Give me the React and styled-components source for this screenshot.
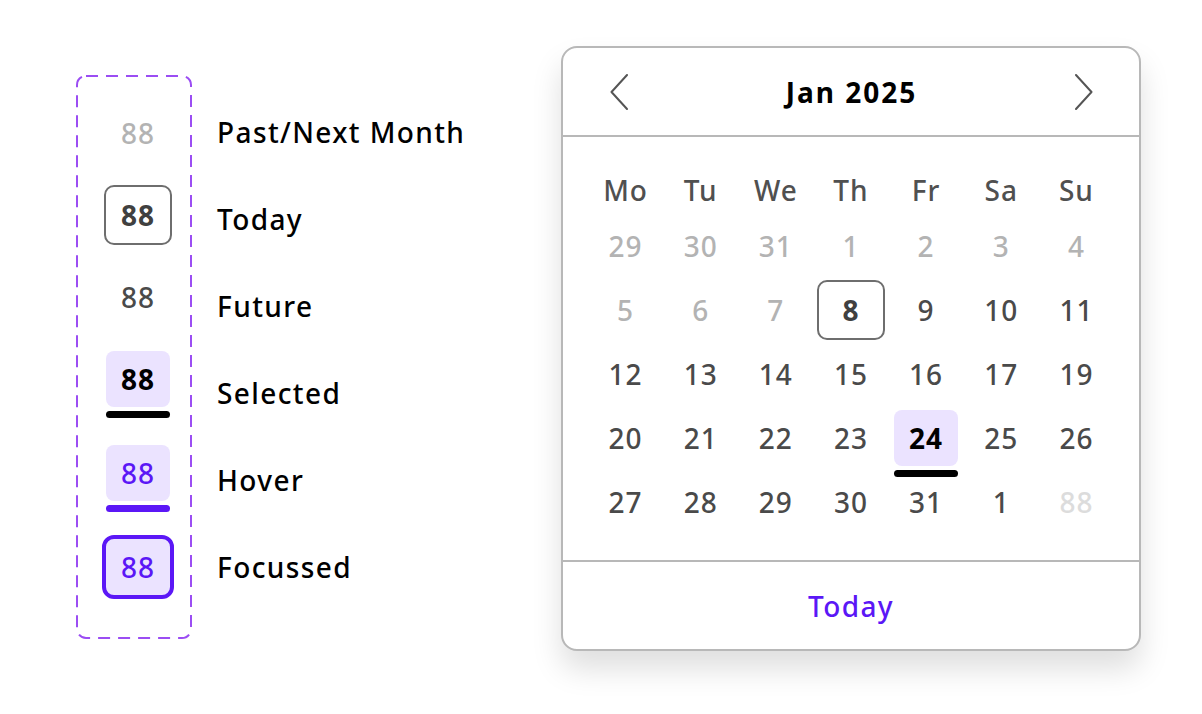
import React from "react";
import styled, { createGlobalStyle, css } from "styled-components";

const PURPLE = "#5b17f6";
const TINT = "#ebe3ff";

const GlobalStyle = createGlobalStyle`
  html, body {
    margin: 0;
    background: #fff;
  }
  body {
    font-family: "Noto Sans", "Liberation Sans", sans-serif;
    color: #000;
  }
`;

const LEGEND = [
  { label: "Past/Next Month", variant: "muted" },
  { label: "Today", variant: "today" },
  { label: "Future", variant: "plain" },
  { label: "Selected", variant: "selected" },
  { label: "Hover", variant: "hover" },
  { label: "Focussed", variant: "focus" },
];

const WEEKDAYS = ["Mo", "Tu", "We", "Th", "Fr", "Sa", "Su"];

const DAYS = [
  ...[29, 30, 31, 1, 2, 3, 4, 5, 6, 7].map((n) => ({ n, variant: "muted" })),
  { n: 8, variant: "today" },
  ...[9, 10, 11, 12, 13, 14, 15, 16, 17, 19, 20, 21, 22, 23].map((n) => ({ n, variant: "plain" })),
  { n: 24, variant: "selected" },
  ...[25, 26, 27, 28, 29, 30, 31, 1].map((n) => ({ n, variant: "plain" })),
  { n: 88, variant: "faint" },
];

const dashedBox = `url("data:image/svg+xml,%3Csvg xmlns='http://www.w3.org/2000/svg' width='116' height='564'%3E%3Crect x='1' y='1' width='114' height='562' rx='9' fill='none' stroke='%239b4df3' stroke-width='2' stroke-dasharray='12 8'/%3E%3C/svg%3E")`;

function Chevron({ flip }) {
  return (
    <svg width="18" height="36" viewBox="0 0 18 36" style={flip ? { transform: "scaleX(-1)" } : undefined}>
      <path d="M17 1 L1.5 18 L17 35" fill="none" stroke="#555" strokeWidth="2" strokeLinecap="round" strokeLinejoin="round" />
    </svg>
  );
}

export default function App() {
  return (
    <S.Page>
      <GlobalStyle />
      <S.Legend>
        <S.Swatches>
          {LEGEND.map(({ label, variant }) => (
            <S.SwatchSlot key={label} $underlined={variant === "selected" || variant === "hover"}>
              <S.Cell $variant={variant}>88</S.Cell>
            </S.SwatchSlot>
          ))}
        </S.Swatches>
        <S.Labels>
          {LEGEND.map(({ label }) => (
            <S.Label key={label}>{label}</S.Label>
          ))}
        </S.Labels>
      </S.Legend>

      <S.Card>
        <S.Header>
          <S.NavButton aria-label="Previous month">
            <Chevron />
          </S.NavButton>
          <S.Title>Jan 2025</S.Title>
          <S.NavButton aria-label="Next month">
            <Chevron flip />
          </S.NavButton>
        </S.Header>

        <S.Body>
          <S.WeekRow>
            {WEEKDAYS.map((d) => (
              <S.Weekday key={d}>{d}</S.Weekday>
            ))}
          </S.WeekRow>
          <S.DayGrid>
            {DAYS.map((d, i) => (
              <S.Cell key={i} $variant={d.variant}>
                {d.n}
              </S.Cell>
            ))}
          </S.DayGrid>
        </S.Body>

        <S.Footer>
          <S.TodayButton>Today</S.TodayButton>
        </S.Footer>
      </S.Card>
    </S.Page>
  );
}

const underline = (color) => css`
  &::after {
    content: "";
    position: absolute;
    left: 0;
    right: 0;
    top: calc(100% + 4px);
    height: 7px;
    border-radius: 4px;
    background: ${color};
  }
`;

const cellVariants = {
  muted: css`
    color: #b3b3b3;
  `,
  faint: css`
    color: #dcdcdc;
  `,
  plain: css`
    color: #4a4a4a;
  `,
  today: css`
    color: #404040;
    font-weight: 700;
    outline: 2px solid #6e6e6e;
  `,
  selected: css`
    color: #000;
    font-weight: 700;
    background: ${TINT};
    ${underline("#000")}
  `,
  hover: css`
    color: ${PURPLE};
    background: ${TINT};
    ${underline(PURPLE)}
  `,
  focus: css`
    color: ${PURPLE};
    background: ${TINT};
    outline: 4px solid ${PURPLE};
  `,
};

const S = {
  Page: styled.div`
    box-sizing: border-box;
    min-height: 100vh;
    display: grid;
    grid-template-columns: 485px 580px;
    align-items: start;
    padding: 46px 0 0 76px;
  `,

  Legend: styled.div`
    display: flex;
    gap: 25px;
    margin-top: 29px;
  `,

  Swatches: styled.div`
    box-sizing: border-box;
    width: 116px;
    height: 564px;
    padding: 30px 0 0 8px;
    display: flex;
    flex-direction: column;
    align-items: center;
    gap: 26px;
    background-image: ${dashedBox};
  `,

  SwatchSlot: styled.div`
    padding-bottom: ${({ $underlined }) => ($underlined ? "12px" : "0")};
  `,

  Labels: styled.div`
    display: flex;
    flex-direction: column;
    padding-top: 13px;
  `,

  Label: styled.div`
    height: 87px;
    display: flex;
    align-items: center;
    font-size: 28px;
    font-weight: 500;
    letter-spacing: 1.4px;
    color: #000;
  `,

  Cell: styled.div`
    position: relative;
    justify-self: center;
    width: 64px;
    height: 56px;
    border-radius: 8px;
    display: flex;
    align-items: center;
    justify-content: center;
    font-size: 28px;
    font-weight: 500;
    letter-spacing: 1px;
    ${({ $variant }) => cellVariants[$variant]}
  `,

  Card: styled.div`
    width: 580px;
    box-sizing: border-box;
    border: 2px solid #b8b8b8;
    border-radius: 16px;
    background: #fff;
    box-shadow: 0 18px 30px rgba(0, 0, 0, 0.13);
    overflow: hidden;
  `,

  Header: styled.div`
    height: 87px;
    display: flex;
    align-items: center;
    justify-content: space-between;
    padding: 0 46px 0 47px;
    border-bottom: 2px solid #b8b8b8;
  `,

  NavButton: styled.div`
    display: flex;
    align-items: center;
  `,

  Title: styled.div`
    font-size: 28px;
    font-weight: 700;
    letter-spacing: 2px;
    color: #000;
  `,

  Body: styled.div`
    padding: 25px 25px 30px;
    border-bottom: 2px solid #b8b8b8;
  `,

  WeekRow: styled.div`
    display: grid;
    grid-template-columns: repeat(7, 1fr);
    height: 56px;
    align-items: center;
  `,

  Weekday: styled.div`
    text-align: center;
    font-size: 28px;
    font-weight: 500;
    letter-spacing: 1px;
    color: #505050;
  `,

  DayGrid: styled.div`
    display: grid;
    grid-template-columns: repeat(7, 1fr);
    grid-auto-rows: 56px;
    row-gap: 8px;
  `,

  Footer: styled.div`
    height: 87px;
    display: flex;
    align-items: center;
    justify-content: center;
  `,

  TodayButton: styled.div`
    font-size: 28px;
    font-weight: 500;
    letter-spacing: 1.4px;
    color: ${PURPLE};
  `,
};
